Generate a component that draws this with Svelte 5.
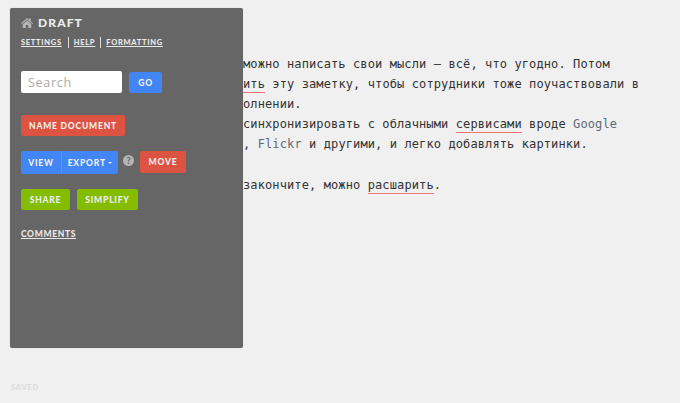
<script>
	let links = ['Settings', 'Help', 'Formatting']
</script>

<main>
	<div class="doc">
		<p>Здесь можно написать свои мысли — всё, что угодно. Потом</p>
		<p>расшар<span class="typo">ить</span> эту заметку, чтобы сотрудники тоже поучаствовали в</p>
		<p>её выполнении.</p>
		<p>Можно синхронизировать с облачными <span class="typo">сервисами</span> вроде <span class="link">Google</span></p>
		<p>&nbsp;<span class="link">Drive</span>, <span class="link">Flickr</span> и другими, и легко добавлять картинки.</p>
		<p>&nbsp;</p>
		<p>Когда закончите, можно <span class="typo">расшарить</span>.</p>
	</div>

	<aside class="panel">
		<h1>
			<svg width="12" height="10" viewBox="0 0 24 20"><path fill="#b5b5b5" d="M12 0 L16 3.4 V1 H19.5 V6.4 L24 10.3 L22.6 12 L12 3.2 L1.4 12 L0 10.3 Z M3.5 12.2 L12 5 L20.5 12.2 V20 H14.5 V14 H9.5 V20 H3.5 Z"/></svg>
			Draft
		</h1>
		<nav>
			{#each links as l, i}
				{#if i > 0}<span class="sep"></span>{/if}
				<a href="#top">{l}</a>
			{/each}
		</nav>

		<div class="row search">
			<input type="text" placeholder="Search" />
			<button class="blue go">Go</button>
		</div>

		<div class="row name">
			<button class="red wide">Name Document</button>
		</div>

		<div class="row actions">
			<div class="group">
				<button class="blue">View</button>
				<button class="blue">Export <i class="caret"></i></button>
			</div>
			<span class="help">?</span>
			<button class="red move">Move</button>
		</div>

		<div class="row share">
			<button class="green">Share</button>
			<button class="green">Simplify</button>
		</div>

		<a class="comments" href="#top">Comments</a>
	</aside>

	<div class="saved">Saved</div>
</main>

<style>
	:global(body) {
		margin: 0;
		background: #f0f0f0;
		overflow: hidden;
	}
	main {
		position: relative;
		height: 403px;
		overflow: hidden;
	}
	.doc {
		padding: 54px 0 0 199px;
		font-family: "DejaVu Sans Mono", monospace;
		font-size: 12px;
		letter-spacing: 0.11px;
		color: #333;
	}
	.doc p {
		margin: 0;
		height: 20px;
		line-height: 20px;
		white-space: pre;
	}
	.doc p:last-child {
		margin-top: 1px;
	}
	.typo {
		border-bottom: 1px solid #f07575;
		padding-bottom: 1px;
	}
	.link {
		color: #5f6b75;
	}
	.panel {
		position: absolute;
		left: 10px;
		top: 8px;
		width: 233px;
		height: 340px;
		box-sizing: border-box;
		padding: 8px 11px;
		background: #666;
		border-radius: 2px;
		box-shadow: 0 0 1px #bbb;
		font-family: Lato, sans-serif;
		font-weight: 900;
		text-transform: uppercase;
		color: #eee;
	}
	h1 {
		margin: 0;
		display: flex;
		align-items: center;
		gap: 5px;
		font-size: 12px;
		line-height: 14px;
		letter-spacing: 1.1px;
		font-weight: 900;
	}
	nav {
		display: flex;
		align-items: center;
		gap: 5px;
		margin-top: 6px;
		height: 12px;
	}
	nav a, .comments {
		color: #e8e8e8;
		text-decoration: underline;
		text-underline-offset: 1px;
		font-size: 7.5px;
		letter-spacing: 0.7px;
	}
	nav a:first-child {
		margin-right: 1px;
	}
	.sep {
		width: 1px;
		height: 11px;
		background: #ddd;
	}
	.row {
		display: flex;
		align-items: flex-start;
	}
	button {
		border: 0;
		height: 21px;
		padding: 0 9px;
		border-radius: 2px;
		font-family: inherit;
		font-weight: 900;
		font-size: 8.5px;
		letter-spacing: 0.8px;
		text-transform: uppercase;
		color: #eee;
	}
	.blue {
		background: #4285f4;
	}
	.red {
		background: #dd5341;
	}
	.green {
		background: #84bd00;
	}
	.search {
		margin-top: 23px;
		gap: 7px;
	}
	input {
		width: 101px;
		height: 22px;
		box-sizing: border-box;
		border: 0;
		border-radius: 2px;
		padding: 0 7px;
		background: #fff;
		font-family: "Open Sans", sans-serif;
		font-size: 12.5px;
		letter-spacing: 0.7px;
	}
	input::placeholder {
		color: #aaa;
	}
	.go {
		width: 33px;
		padding: 0;
		margin-top: 1px;
	}
	.name {
		margin-top: 22px;
	}
	.wide {
		width: 104px;
		padding: 0;
	}
	.actions {
		margin-top: 15px;
	}
	.group {
		display: flex;
		width: 97px;
		height: 23px;
		border-radius: 2px;
		overflow: hidden;
	}
	.group button {
		height: 23px;
		border-radius: 0;
		padding: 0;
	}
	.group button:first-child {
		width: 41px;
		border-right: 1px solid #5c93ee;
	}
	.group button:last-child {
		flex: 1;
	}
	.caret {
		display: inline-block;
		vertical-align: middle;
		border: 2px solid transparent;
		border-top-color: #eee;
		border-bottom: 0;
	}
	.help {
		width: 11px;
		height: 11px;
		margin: 4px 6px 0 5px;
		border-radius: 50%;
		background: #b5b5b5;
		color: #666;
		font-size: 9px;
		line-height: 11px;
		text-align: center;
		flex: none;
	}
	.move {
		width: 46px;
		height: 22px;
		padding: 0;
	}
	.share {
		margin-top: 15px;
		gap: 7px;
	}
	.share button:first-child {
		width: 49px;
		padding: 0;
	}
	.share button:last-child {
		width: 61px;
		padding: 0;
	}
	.comments {
		display: block;
		margin-top: 19px;
		font-size: 8.5px;
		letter-spacing: 0.65px;
	}
	.saved {
		position: absolute;
		left: 11px;
		top: 383px;
		font-family: Lato, sans-serif;
		font-weight: 900;
		font-size: 7.5px;
		letter-spacing: 0.8px;
		text-transform: uppercase;
		color: #ddd;
	}
</style>
